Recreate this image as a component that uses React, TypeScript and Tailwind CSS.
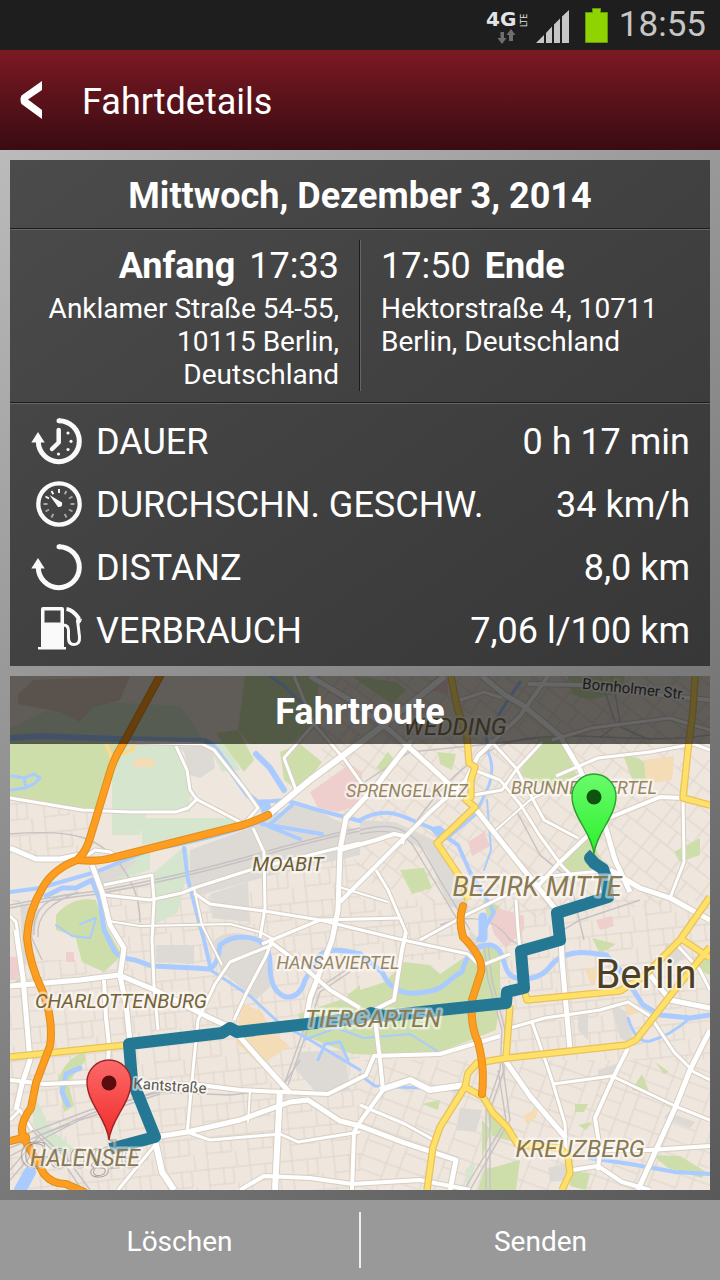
import type { ReactNode } from "react";

type Point = [number, number];

const line = (points: Point[]) =>
  "M" + points.map(([x, y]) => `${x} ${y}`).join("L");

/* Map data, in one shared coordinate space: 700 x 514 units from (10, 676). */

const parks = [
  "M10 743L122 743L96 812L60 808L10 797Z",
  "M56 915Q72 896 96 900L108 938L80 938L56 930Z",
  "M75 935L105 925L122 955L104 972L82 962Z",
  "M245 676L320 676L314 724L290 744L250 744L238 730Z",
  "M280 752L300 744L322 762L300 792L284 780Z",
  "M216 733L238 730L254 760L244 772Z",
  "M540 738Q556 734 563 744L577 775L556 790L518 774Z",
  "M562 862L590 838L606 868L574 878Z",
  "M385 982L404 962L430 965L440 974L484 944L500 950L500 1000L496 1030L440 1052L378 1055L352 1054L336 1048L304 1036L298 1014L340 1000L360 990Z",
  "M348 995L360 985V1008L344 1010Z",
  "M622 752L650 764L655 778L634 784Z",
  "M674 852L700 838L700 855L680 862Z",
  "M690 965L710 950L710 975Z",
  "M484 1100L510 1124L514 1142L492 1136Z",
  "M484 1170L520 1160L516 1190L478 1190Z",
  "M482 1120L491 1130L482 1158Z",
  "M571 1170L590 1174L586 1190L570 1186Z",
  "M632 1090L642 1074L650 1094Z",
  "M655 1062L669 1072L664 1074Z",
  "M652 1155L680 1156L706 1172L702 1178L668 1168Z",
  "M58 1080Q66 1058 84 1052L86 1060L68 1082L74 1106L64 1112Z",
  "M10 985L20 978L18 988Z",
  "M592 938L616 944L600 954Z",
  "M438 752L456 754L452 770L440 764Z",
  "M376 768L388 752L396 762L384 772Z",
  "M352 676L396 682L406 690L392 704Z",
  "M568 676L625 676L622 692L590 700L572 694Z",
  "M482 900L500 906L490 922Z",
  "M400 870L424 868L432 888L412 894Z",
  "M575 1104L588 1104L584 1112L575 1112Z",
  "M578 1125L592 1122L586 1130Z",
  "M422 1104L440 1100L438 1110Z",
];

const meadows = [
  "M122 745L178 743L190 795L190 812L146 814L140 835L112 835L112 775Z",
  "M142 818L240 818L236 830L142 845Z",
  "M152 874L186 845L190 860L178 912L154 925Z",
  "M30 1085L50 1128L75 1150L58 1156L34 1128Z",
  "M10 728L70 700L180 706L205 742L10 745Z",
  "M96 870L150 850L150 870L102 885Z",
  "M206 742L225 740L240 770L222 772Z",
  "M465 1170L476 1162L468 1190Z",
];

const greyBlocks = [
  "M178 747L212 745L215 768L200 778L190 775L184 752Z",
  "M94 874L125 862L138 860L112 884L96 886Z",
  "M190 850L255 826L300 802L360 832L360 855L268 876L190 898Z",
  "M210 894L248 882L250 922L212 918Z",
  "M156 945L194 945L194 964L156 962Z",
  "M214 940Q234 924 266 944L272 985L256 1000L220 970Z",
  "M298 1052L345 1050L350 1090L318 1094L296 1070Z",
  "M360 820L395 822L438 842L465 890L470 915L448 905L425 850L396 835L360 845Z",
  "M10 900L40 910L24 970L20 900Z",
  "M610 1002L626 1012L634 1046L620 1038Z",
  "M664 942L688 955L670 968Z",
  "M668 1112L695 1122L690 1128L664 1118Z",
  "M548 1168L570 1162L570 1180L550 1182Z",
  "M598 1070L616 1064L614 1076L598 1080Z",
  "M470 930L485 945L478 960L468 950Z",
  "M460 1108L482 1110L476 1132L456 1130Z",
  "M578 1010L588 1016L588 1040L578 1030Z",
];

const pinkBlocks = [
  "M310 792L350 764L362 772V804L338 812L318 808Z",
  "M468 842L484 832L490 846L472 856Z",
  "M490 920L498 908L524 916L524 930L506 948L494 934Z",
  "M10 957L20 957L18 980L10 980Z",
  "M66 952L74 952L74 962L66 962Z",
  "M430 680L448 682L448 694L430 690Z",
  "M596 920L612 916L614 926L600 930Z",
];

const tanBlocks = [
  "M240 1012L244 1004L262 1012L272 1032L290 1046L260 1065L236 1042Z",
  "M644 760L674 756L672 780L646 784Z",
  "M584 968L602 970L592 986Z",
  "M624 1006L640 1004L638 1012L628 1016Z",
  "M542 820L550 816L546 824Z",
  "M524 1115L538 1108L536 1118L526 1124Z",
  "M136 758L154 758L154 767L132 767Z",
];

const rails = [
  "M10 905Q60 895 98 891Q180 876 250 856T360 828",
  "M10 908Q60 898 98 894Q180 879 250 859T360 831",
  "M34 935C32 908 50 895 74 894",
  "M38 937C36 914 52 902 78 892",
  "M28 930L42 960M24 930L36 970",
  "M360 830C390 822 405 828 418 842L440 880L470 930",
  "M360 834C386 828 402 832 412 844L436 884L466 934",
  "M10 834Q60 830 84 838T124 870T140 922",
  "M405 838C430 800 470 745 530 738S640 745 710 735",
  "M360 785L410 752L480 745L540 738",
  "M484 945L488 980L502 1030L500 1070L486 1110L486 1190",
  "M488 945L492 980L505 1030L504 1070L490 1110L490 1190",
  "M502 1060L510 1120L470 1190M498 1070L506 1120L464 1190",
  "M300 1060L280 1090L230 1095L160 1092L90 1110L10 1140",
  "M160 1090L90 1114L10 1148M160 1094L80 1120L10 1156",
  "M32 1130L62 1160L82 1190M36 1130L68 1160L90 1190",
  "M10 1170L40 1135L70 1124M10 1180L36 1150",
  "M346 970L316 990L300 1040L284 1085",
  "M350 972L320 992L304 1040L288 1085",
  "M600 676L616 725L650 740M612 676L620 722L600 738",
  "M440 925C480 910 500 925 510 940L530 950L580 920L640 900",
  "M516 810L540 855L570 880L584 940",
];

const waters: { d: string; w: number }[] = [
  { d: "M10 738L40 736L120 739L205 741Q214 745 222 758L248 795L262 806", w: 6 },
  { d: "M262 806L276 812L260 822Q200 842 152 849L96 872L40 888L10 892", w: 4 },
  { d: "M262 802L285 800L318 810L360 821", w: 4 },
  { d: "M292 805L268 826L300 839M262 824L322 834", w: 4 },
  { d: "M256 754L270 768L284 790", w: 6 },
  { d: "M184 848L188 880L204 940L210 966", w: 4 },
  { d: "M46 896L62 888L76 888L92 880L100 900L104 930L115 952Q120 958 135 960L152 966L195 968L209 969Q218 966 220 945Q236 932 258 940Q270 946 270 965Q270 992 286 997Q300 998 305 980L320 955Q330 946 360 954", w: 5 },
  { d: "M360 954L382 972C392 994 408 995 425 992C446 990 448 978 462 972C466 954 478 944 490 945C508 948 500 974 516 978Q540 982 552 964Q566 950 590 953L606 955L620 970Q632 988 643 1005L660 1015L690 1018L710 1015", w: 5 },
  { d: "M209 969L250 996L278 1022L310 1040L360 1070", w: 3 },
  { d: "M628 1018Q636 1044 650 1041Q670 1036 690 1018", w: 3 },
  { d: "M360 820Q382 808 402 816L436 830L458 845L470 872L494 912L478 940", w: 4 },
  { d: "M450 836L475 815L487 790Q496 770 488 752L486 735L508 700L520 682", w: 3 },
  { d: "M487 800L491 850L484 870", w: 2 },
  { d: "M483 917L483 938", w: 9 },
  { d: "M68 1105L62 1092L66 1074L80 1068", w: 5 },
  { d: "M30 1172L20 1190", w: 12 },
  { d: "M590 1158L630 1164L675 1172L710 1174", w: 4 },
  { d: "M304 1040L336 1028L364 1038L410 1034L442 1054", w: 2 },
  { d: "M318 1060L325 1044L340 1042L348 1060", w: 3 },
  { d: "M360 1075L375 1086L464 1090", w: 3 },
  { d: "M270 676L284 686L302 704", w: 3 },
  { d: "M10 790L26 788L24 778L12 776M24 778L34 774L40 778L34 784L24 788", w: 3 },
  { d: "M56 925L72 936L90 938L96 918L80 924", w: 2 },
];

const streets: { points: Point[]; w: number }[] = [
  { points: [[10, 798], [40, 803], [82, 810], [130, 812], [176, 812], [188, 808], [198, 798]], w: 3 },
  { points: [[10, 848], [36, 859], [60, 859], [80, 855]], w: 5 },
  { points: [[88, 855], [95, 850], [110, 852], [118, 858]], w: 3 },
  { points: [[92, 865], [102, 892], [110, 925], [124, 948], [120, 976], [126, 1004], [130, 1042]], w: 5 },
  { points: [[104, 885], [152, 875], [154, 900], [152, 940], [154, 985], [158, 1030]], w: 3 },
  { points: [[104, 895], [150, 900], [182, 893], [194, 888], [250, 870], [330, 850], [360, 843]], w: 3 },
  { points: [[194, 888], [202, 925], [222, 965]], w: 2 },
  { points: [[108, 921], [140, 926], [230, 924], [260, 932], [275, 940]], w: 2 },
  { points: [[194, 893], [210, 904], [264, 911], [320, 920], [400, 918]], w: 3 },
  { points: [[253, 828], [264, 852], [265, 908], [260, 938]], w: 3 },
  { points: [[196, 799], [244, 824], [258, 808], [244, 788], [214, 750], [202, 744], [120, 742]], w: 3 },
  { points: [[176, 746], [187, 770], [190, 790], [197, 800]], w: 3 },
  { points: [[269, 814], [310, 780], [345, 754], [380, 728], [410, 704], [445, 676]], w: 6 },
  { points: [[294, 676], [314, 724], [345, 760], [362, 784]], w: 3 },
  { points: [[314, 724], [284, 758], [296, 790]], w: 3 },
  { points: [[310, 676], [350, 700], [392, 732], [434, 770], [462, 796], [478, 812], [516, 860], [558, 912]], w: 5 },
  { points: [[340, 902], [392, 850], [430, 812], [466, 780], [478, 756], [520, 716], [548, 676]], w: 4 },
  { points: [[376, 870], [388, 890], [406, 932]], w: 3 },
  { points: [[336, 886], [388, 902]], w: 2 },
  { points: [[412, 740], [376, 786], [346, 818], [340, 850], [338, 910], [332, 940], [310, 998], [304, 1030]], w: 5 },
  { points: [[340, 850], [376, 840], [394, 834], [404, 836], [402, 844]], w: 4 },
  { points: [[482, 676], [505, 695], [524, 706], [560, 736], [580, 770], [604, 822], [615, 860], [630, 892]], w: 5 },
  { points: [[460, 700], [484, 692], [502, 698]], w: 3 },
  { points: [[490, 740], [516, 768], [544, 820], [578, 838]], w: 3 },
  { points: [[474, 770], [500, 780], [520, 804], [540, 836], [562, 866], [574, 878]], w: 3 },
  { points: [[542, 742], [516, 770], [502, 790], [474, 795]], w: 3 },
  { points: [[556, 776], [598, 758], [650, 752], [694, 744], [710, 750]], w: 3 },
  { points: [[496, 830], [530, 800], [580, 775]], w: 2 },
  { points: [[538, 886], [560, 862], [604, 820], [660, 797], [683, 798]], w: 4 },
  { points: [[610, 870], [640, 888], [670, 898], [710, 920]], w: 5 },
  { points: [[516, 882], [560, 875], [612, 870]], w: 3 },
  { points: [[683, 798], [684, 862], [670, 898]], w: 3 },
  { points: [[552, 740], [592, 728], [670, 718], [710, 730]], w: 3 },
  { points: [[528, 684], [580, 685], [630, 692], [710, 700]], w: 4 },
  { points: [[420, 940], [468, 914], [516, 890]], w: 3 },
  { points: [[516, 900], [518, 930], [520, 950]], w: 3 },
  { points: [[560, 912], [562, 960], [570, 1050]], w: 5 },
  { points: [[406, 932], [402, 950], [394, 1000], [374, 1010], [380, 1060], [383, 1090], [360, 1122]], w: 4 },
  { points: [[262, 944], [320, 920], [394, 938], [468, 954], [480, 966], [510, 954]], w: 3 },
  { points: [[10, 986], [80, 980], [119, 975], [155, 990], [210, 1018], [232, 1028], [262, 1062], [290, 1093]], w: 5 },
  { points: [[16, 930], [23, 978], [30, 1060], [22, 1084], [16, 1110]], w: 5 },
  { points: [[104, 980], [106, 1018], [109, 1044], [107, 1080]], w: 4 },
  { points: [[10, 1080], [44, 1084], [90, 1082], [200, 1085], [240, 1090], [328, 1094], [366, 1075], [374, 1056], [440, 1054], [500, 1036]], w: 4 },
  { points: [[272, 945], [230, 962], [215, 984], [198, 1020], [194, 1060], [187, 1134]], w: 3 },
  { points: [[272, 940], [266, 956], [246, 994], [234, 1020]], w: 3 },
  { points: [[268, 940], [300, 964], [330, 990], [360, 1008]], w: 4 },
  { points: [[155, 1137], [187, 1132], [240, 1120], [290, 1102], [308, 1100], [340, 1121], [360, 1126], [402, 1142], [456, 1160], [450, 1190]], w: 5 },
  { points: [[187, 1132], [210, 1140], [280, 1134], [298, 1142], [360, 1132]], w: 3 },
  { points: [[280, 1090], [278, 1130], [275, 1190]], w: 6 },
  { points: [[240, 1190], [264, 1176], [310, 1178], [352, 1184], [420, 1180], [470, 1190]], w: 4 },
  { points: [[155, 1140], [162, 1172], [174, 1190]], w: 6 },
  { points: [[155, 1145], [118, 1190]], w: 3 },
  { points: [[250, 1090], [248, 1122]], w: 2 },
  { points: [[360, 1122], [354, 1132], [352, 1190]], w: 4 },
  { points: [[380, 1090], [410, 1080], [430, 1090], [465, 1085]], w: 6 },
  { points: [[360, 1105], [405, 1124], [434, 1140]], w: 3 },
  { points: [[505, 1060], [530, 1096], [566, 1138]], w: 5 },
  { points: [[532, 1022], [552, 1080], [565, 1124], [566, 1150]], w: 3 },
  { points: [[510, 1028], [545, 1018], [600, 1010], [628, 1002], [650, 1016], [674, 1052], [694, 1072], [710, 1080]], w: 3 },
  { points: [[553, 1084], [612, 1076], [675, 1106], [710, 1120]], w: 3 },
  { points: [[628, 1048], [612, 1080], [595, 1118], [600, 1150], [598, 1170]], w: 4 },
  { points: [[710, 1030], [690, 1070], [675, 1108], [638, 1190]], w: 5 },
  { points: [[572, 1170], [598, 1166], [622, 1182], [650, 1190]], w: 4 },
  { points: [[590, 1150], [650, 1150], [710, 1146]], w: 4 },
  { points: [[650, 975], [670, 1000], [710, 1008]], w: 5 },
  { points: [[677, 945], [700, 970], [710, 990]], w: 3 },
  { points: [[10, 916], [16, 922], [18, 935]], w: 3 },
  { points: [[10, 1120], [20, 1110], [32, 1130]], w: 3 },
];

const majorRoads: Point[][] = [
  [[451, 676], [457, 707], [467, 737], [469, 763], [475, 767], [471, 780], [471, 797], [466, 800], [475, 807], [437, 843], [462, 880], [468, 900]],
  [[695, 676], [693, 710], [688, 750], [683, 798], [710, 805]],
  [[710, 897], [680, 940], [660, 960], [643, 977], [620, 991], [527, 1000], [524, 990]],
  [[710, 947], [677, 987], [650, 1022], [636, 1040], [626, 1045], [507, 1058], [477, 1063], [468, 1073], [465, 1087], [440, 1127], [433, 1147], [427, 1190]],
  [[680, 938], [710, 958]],
  [[510, 1005], [506, 1058]],
  [[465, 1087], [483, 1097], [493, 1113], [507, 1127], [518, 1145], [560, 1148], [568, 1156], [570, 1173], [562, 1190]],
  [[10, 1057], [126, 1045]],
];

const motorways = [
  "M160 676L123 744Q114 758 110 772L90 838Q86 852 78 859",
  "M78 860Q98 862 112 858L243 825Q258 820 268 815",
  "M80 859Q54 868 43 887Q28 912 27 938Q30 965 42 990Q54 1020 50 1046L36 1083L31 1108Q16 1128 26 1142Q36 1160 44 1174Q52 1184 66 1184L84 1192",
  "M463 906Q458 920 463 937Q484 958 481 972L472 1000Q470 1025 478 1042Q485 1068 482 1094",
  "M10 1141L26 1137",
];

const route: Point[] = [
  [594, 854], [590, 858], [594, 863], [603, 869], [606, 878], [608, 897], [557, 913], [560, 940], [521, 951], [524, 988], [507, 992], [506, 1003], [440, 1010], [385, 1016], [371, 1013], [360, 1018], [237, 1032], [230, 1028], [222, 1033], [129, 1044], [132, 1080], [155, 1137], [110, 1149],
];

const districts: { x: number; y: number; size: number; fill: string; text: string }[] = [
  { x: 455, y: 735, size: 24, fill: "#8a7950", text: "WEDDING" },
  { x: 407, y: 797, size: 18, fill: "#978661", text: "SPRENGELKIEZ" },
  { x: 584, y: 794, size: 18, fill: "#978661", text: "BRUNNENVIERTEL" },
  { x: 288, y: 871, size: 20, fill: "#6f5c30", text: "MOABIT" },
  { x: 537, y: 896, size: 27, fill: "#8a7950", text: "BEZIRK MITTE" },
  { x: 338, y: 969, size: 18, fill: "#978661", text: "HANSAVIERTEL" },
  { x: 121, y: 1008, size: 20, fill: "#756338", text: "CHARLOTTENBURG" },
  { x: 373, y: 1027, size: 24, fill: "#8a7950", text: "TIERGARTEN" },
  { x: 580, y: 1157, size: 24, fill: "#8a7950", text: "KREUZBERG" },
];

function Pin({ x, y, fill, edge, dot }: { x: number; y: number; fill: string; edge: string; dot: string }) {
  return (
    <g>
      <path
        d={`M${x} ${y + 57}C${x - 2} ${y + 36} ${x - 22} ${y + 20} ${x - 22} ${y - 1}A22 22 0 0 1 ${x + 22} ${y - 1}C${x + 22} ${y + 20} ${x + 2} ${y + 36} ${x} ${y + 57}Z`}
        fill={fill}
        stroke={edge}
        strokeWidth="1.4"
      />
      <circle cx={x} cy={y} r="7.5" fill={dot} />
    </g>
  );
}

function RouteMap() {
  return (
    <svg
      viewBox="10 676 700 514"
      role="img"
      aria-label="Fahrtroute"
      className="block h-auto w-full bg-[#efe6dd] font-['Roboto',sans-serif]"
    >
      <defs>
        <pattern id="blocksA" width="42" height="32" patternUnits="userSpaceOnUse" patternTransform="rotate(-6)">
          <path d="M0 1H42M0 17H26M1 0V32M16 0V17M30 17V32M26 1V17" fill="none" stroke="#ddd4cb" />
        </pattern>
        <pattern id="blocksB" width="38" height="34" patternUnits="userSpaceOnUse" patternTransform="rotate(38)">
          <path d="M0 1H38M0 18H38M1 0V34M20 0V18M12 18V34" fill="none" stroke="#ddd4cb" />
        </pattern>
        <pattern id="blocksC" width="40" height="30" patternUnits="userSpaceOnUse" patternTransform="rotate(20)">
          <path d="M0 1H40M1 0V30M15 0V30M15 15H40" fill="none" stroke="#ddd4cb" />
        </pattern>
        <linearGradient id="pinGreen" x1="0" y1="0" x2="0" y2="1">
          <stop offset="0" stopColor="#69fb6c" />
          <stop offset="1" stopColor="#2df02c" />
        </linearGradient>
        <linearGradient id="pinRed" x1="0" y1="0" x2="0" y2="1">
          <stop offset="0" stopColor="#fb6a69" />
          <stop offset="1" stopColor="#f02a2a" />
        </linearGradient>
      </defs>

      <path d="M10 800H95V860L10 860ZM104 890L360 850V1190H10V960H120Z" fill="url(#blocksA)" />
      <path d="M300 676H710V900L500 920L360 880Z" fill="url(#blocksB)" />
      <path d="M500 900H710V1060L500 1060ZM360 900H460V960H360Z" fill="url(#blocksA)" />
      <path d="M360 1060H710V1190H360Z" fill="url(#blocksC)" />

      <g fill="#d6e6ce">{meadows.map((d) => <path key={d} d={d} />)}</g>
      <path d="M18 694L34 680L130 676L120 700L92 708L80 722L60 712L18 704Z" fill="#e0cdbd" />
      <g fill="#cddeab">{parks.map((d) => <path key={d} d={d} />)}</g>
      <g fill="#dddad5">{greyBlocks.map((d) => <path key={d} d={d} />)}</g>
      <g fill="#efcfcd">{pinkBlocks.map((d) => <path key={d} d={d} />)}</g>
      <g fill="#f3dcb6">{tanBlocks.map((d) => <path key={d} d={d} />)}</g>

      <g fill="none" stroke="#c6c2c4" strokeWidth="1.4">
        {rails.map((d) => <path key={d} d={d} />)}
      </g>
      <g fill="none" stroke="#a9cbff" strokeLinejoin="round" strokeLinecap="round">
        {waters.map(({ d, w }) => <path key={d} d={d} strokeWidth={w} />)}
        <path d="M430 828L440 826L452 836L442 842Z" fill="#a9cbff" />
        <path d="M260 800L268 800L274 815L264 822Z" fill="#a9cbff" />
      </g>

      <g fill="none" strokeLinejoin="round">
        <g stroke="#d6cec2">
          {streets.map(({ points, w }) => <path key={line(points)} d={line(points)} strokeWidth={w + 2} />)}
        </g>
        <g stroke="#ffffff">
          {streets.map(({ points, w }) => <path key={line(points)} d={line(points)} strokeWidth={w} />)}
        </g>
        <g stroke="#e7c25c" strokeWidth="7.5">
          {majorRoads.map((points) => <path key={line(points)} d={line(points)} />)}
        </g>
        <g stroke="#ffe169" strokeWidth="5">
          {majorRoads.map((points) => <path key={line(points)} d={line(points)} />)}
        </g>
        <path d="M106 744L112 758M122 754L132 750L134 744" stroke="#fbd98a" strokeWidth="4" />
        <g stroke="#dc8f1c" strokeWidth="8" strokeLinecap="round">
          {motorways.map((d) => <path key={d} d={d} />)}
        </g>
        <g stroke="#ff9d20" strokeWidth="6" strokeLinecap="round">
          {motorways.map((d) => <path key={d} d={d} />)}
        </g>
        <path d={line(route)} stroke="#247893" strokeWidth="12" />
      </g>

      <text x="20" y="1168" fontSize="40" fill="#ffffff" fillOpacity="0.35" stroke="#77706a" strokeOpacity="0.6" className="font-['Liberation_Serif',serif]">
        Google
      </text>

      <g textAnchor="middle" fontStyle="italic" stroke="#ffffff" strokeOpacity="0.5" strokeWidth="5" strokeLinejoin="round" paintOrder="stroke">
        {districts.map(({ x, y, size, fill, text }) => (
          <text key={text} x={x} y={y} fontSize={size} fill={fill}>{text}</text>
        ))}
        <text x="85" y="1166" fontSize="23" fill="#8a7950">HALENSEE</text>
      </g>
      <g textAnchor="middle" stroke="#ffffff" strokeOpacity="0.6" strokeWidth="4" strokeLinejoin="round" paintOrder="stroke">
        <text x="646" y="988" fontSize="40" fill="#4d3f24">Berlin</text>
        <text x="170" y="1091" fontSize="15" fill="#5d574c" transform="rotate(4 170 1086)">Kantstraße</text>
        <text x="634" y="694" fontSize="15" fill="#4a463f" transform="rotate(6 634 688)">Bornholmer Str.</text>
      </g>

      <Pin x={594} y={797} fill="url(#pinGreen)" edge="#2aa02c" dot="#0e5410" />
      <Pin x={109} y={1083} fill="url(#pinRed)" edge="#a12224" dot="#5a0d0e" />
    </svg>
  );
}

function Icon({ children }: { children: ReactNode }) {
  return (
    <svg viewBox="0 0 54 50" aria-hidden="true" className="h-[50px] w-[54px] shrink-0" fill="none" stroke="#fafafa">
      {children}
    </svg>
  );
}

const loop = (
  <>
    <path d="M29 4.7A20.5 20.5 0 1 1 8.3 25" strokeWidth="5" />
    <circle cx="29" cy="4.7" r="2.5" fill="#fafafa" stroke="none" />
    <path d="M8 16L1.300 26.500H14.700Z" fill="#fafafa" stroke="none" />
  </>
);

const durationIcon = (
  <Icon>
    {loop}
    <path d="M28.700 14V26.500L22 33" strokeWidth="4.500" strokeLinecap="round" strokeLinejoin="round" />
    <g fill="#fafafa" stroke="none">
      <circle cx="38" cy="17" r="1.600" />
      <circle cx="41" cy="25.300" r="1.600" />
      <circle cx="38" cy="33.500" r="1.600" />
      <circle cx="28.500" cy="38" r="1.600" />
    </g>
  </Icon>
);

const speedIcon = (
  <Icon>
    <circle cx="29" cy="25" r="20.700" strokeWidth="4.300" />
    <g strokeWidth="1.900">
      <path d="M29 10V14M21.500 12L23.300 15.300M15.500 17.500L19 19.500" />
      <path d="M36.500 12L34.700 15.300M42.500 17.500L39 19.500M44.500 25H40.500M42.500 32.500L39 30.500M36.500 38.500L34.700 35M13.500 25H17.500M15.500 32.500L19 30.500M21.500 38.500L23.300 35" opacity="0.55" />
    </g>
    <path d="M19.500 16L32 23.500Q33 28.500 28 28Z" fill="#fafafa" stroke="none" />
  </Icon>
);

const distanceIcon = <Icon>{loop}</Icon>;

const fuelIcon = (
  <Icon>
    <path
      fillRule="evenodd"
      d="M13 2H32Q34 2 34 4V42H36V44.500H8V42H11V4Q11 2 13 2ZM14.500 5.500V17.500H30.500V5.500Z"
      fill="#fafafa"
      stroke="none"
    />
    <path d="M33 20Q38.500 20 38.500 25.500V33Q38.500 39.500 44 39.500Q50 39.500 49.500 32L47.500 15" strokeWidth="3" />
    <path d="M36.500 4Q43 5 48.500 13L48 17" strokeWidth="4" />
    <path d="M46 16L52 13.500L51 17L48 20Z" fill="#fafafa" stroke="none" />
  </Icon>
);

const stats = [
  { icon: durationIcon, label: "DAUER", value: "0 h 17 min" },
  { icon: speedIcon, label: "DURCHSCHN. GESCHW.", value: "34 km/h" },
  { icon: distanceIcon, label: "DISTANZ", value: "8,0 km" },
  { icon: fuelIcon, label: "VERBRAUCH", value: "7,06 l/100 km" },
];

function StatusBar() {
  return (
    <div className="flex h-[50px] items-center justify-end bg-[#1e1e1e] pr-3.5">
      <svg viewBox="484 0 126 50" aria-hidden="true" className="mr-2 h-[50px] w-[126px]">
        <text x="485" y="26" fontSize="20" fontWeight="700" fill="#e4e4e4" className="font-['DejaVu_Sans',sans-serif]">4G</text>
        <text x="526" y="27" fontSize="8" fill="#e4e4e4" transform="rotate(-90 526 27)" className="font-['DejaVu_Sans',sans-serif]">LTE</text>
        <path d="M499.500 32H503V38H505.500L501 44L496.500 38H499.500Z" fill="#6e6e6e" />
        <path d="M508 41H512V35H514.500L510 29L505.500 35H508Z" fill="#6e6e6e" />
        <path d="M535 43L543 35V43ZM545 43V33L551 26.500V43ZM553 43V24.500L559 18.500V43ZM561 43V16.500L568 10V43Z" fill="#c6c6c6" />
        <path d="M591.500 8.500H599.500V12.500H606.500V42.500H584.500V12.500H591.500Z" fill="#8fd400" stroke="#659a08" />
      </svg>
      <time className="text-[35px] leading-[50px] text-[#c6c6c6]">18:55</time>
    </div>
  );
}

export default function App() {
  return (
    <div className="flex min-h-screen flex-col bg-[#8a8a8a] font-['Roboto',sans-serif] text-white">
      <StatusBar />

      <header className="flex h-[100px] items-center bg-linear-to-b from-[#7c1923] to-[#3a0b12]">
        <button type="button" aria-label="Zurück" className="flex h-full w-[82px] items-center pl-5">
          <svg viewBox="0 0 24 40" aria-hidden="true" className="h-10 w-6">
            <path d="M22 1V10L8 19.500L22 30V39L1.500 24Q-0.500 19.500 1.500 15.500Z" fill="#ffffff" />
          </svg>
        </button>
        <h1 className="pt-1 text-[36px]">Fahrtdetails</h1>
      </header>

      <main className="flex flex-1 flex-col gap-2.5 bg-linear-144 from-[#bbbbbb] to-[#595959] p-2.5">
        <section className="bg-linear-144 from-[#4b4b4b] to-[#373737]">
          <h2 className="border-b border-[#1c1c1c] pt-3.5 pb-2.5 text-center text-[36px] leading-11 font-bold">
            Mittwoch, Dezember 3, 2014
          </h2>
          <div className="flex border-y border-t-[#666666] border-b-[#1c1c1c] pt-2.5 pb-[11px]">
            <div className="flex-1 border-r border-[#1c1c1c] pr-5 pl-5 text-right">
              <p className="pt-1 text-[36px] leading-11">
                <b>Anfang</b>
                <time className="ml-3.5">17:33</time>
              </p>
              <address className="pt-1 text-[28px] leading-[33px] not-italic">
                Anklamer Straße 54-55, 10115 Berlin, Deutschland
              </address>
            </div>
            <div className="flex-1 border-l border-[#666666] pr-5 pl-5">
              <p className="pt-1 text-[36px] leading-11">
                <time className="mr-3.5">17:50</time>
                <b>Ende</b>
              </p>
              <address className="pt-1 text-[28px] leading-[33px] not-italic">
                Hektorstraße 4, 10711 Berlin, Deutschland
              </address>
            </div>
          </div>
          <dl className="border-t border-[#666666] py-[5px] pr-5 pl-5 text-[36px]">
            {stats.map(({ icon, label, value }) => (
              <div key={label} className="flex h-[63px] items-center">
                {icon}
                <dt className="ml-3 flex-1 pt-0.5">{label}</dt>
                <dd className="pt-0.5">{value}</dd>
              </div>
            ))}
          </dl>
        </section>

        <section className="relative">
          <RouteMap />
          <h2 className="absolute inset-x-0 top-0 bg-black/60 pt-3.5 pb-2.5 text-center text-[36px] leading-11 font-bold">
            Fahrtroute
          </h2>
        </section>
      </main>

      <footer className="flex h-20 items-center bg-[#999999] text-[28px]">
        <button type="button" className="h-full flex-1 pt-1">Löschen</button>
        <span aria-hidden="true" className="h-14 w-0.5 bg-[#eeeeee]" />
        <button type="button" className="h-full flex-1 pt-1">Senden</button>
      </footer>
    </div>
  );
}
